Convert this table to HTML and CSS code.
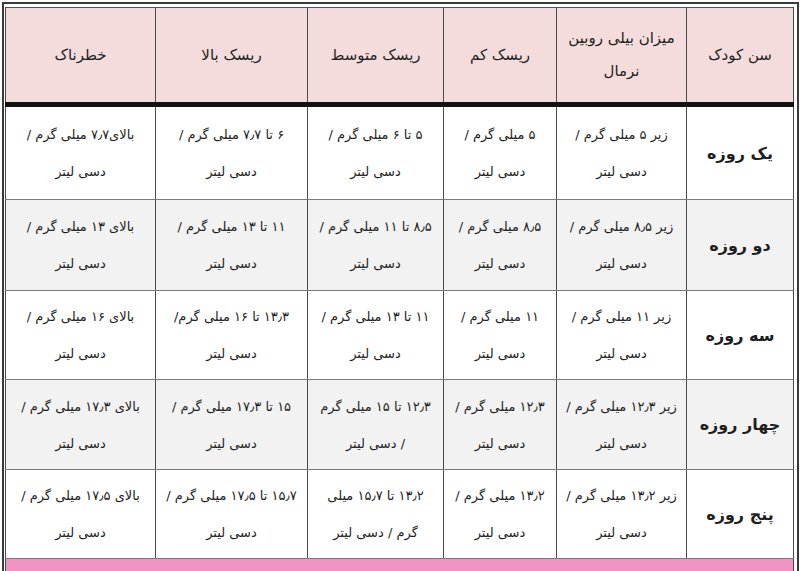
FILE: index.html
```html
<!DOCTYPE html>
<html lang="fa" dir="rtl">
<head>
<meta charset="utf-8">
<link rel="stylesheet" href="styles.css">
</head>
<body>
<div class="frame">
<table class="grid">
<colgroup>
<col class="c-age"><col class="c-norm"><col class="c-low"><col class="c-mid"><col class="c-high"><col class="c-danger">
</colgroup>
<thead>
<tr class="head">
<th>سن کودک</th>
<th>میزان بیلی روبین<br>نرمال</th>
<th>ریسک کم</th>
<th>ریسک متوسط</th>
<th>ریسک بالا</th>
<th>خطرناک</th>
</tr>
</thead>
<tbody>
<tr class="r1">
<td class="age">یک روزه</td>
<td>زیر ۵ میلی گرم /<br>دسی لیتر</td>
<td>۵ میلی گرم /<br>دسی لیتر</td>
<td>۵ تا ۶ میلی گرم /<br>دسی لیتر</td>
<td>۶ تا ۷٫۷ میلی گرم /<br>دسی لیتر</td>
<td>بالای۷٫۷ میلی گرم /<br>دسی لیتر</td>
</tr>
<tr class="r2 alt">
<td class="age">دو روزه</td>
<td>زیر ۸٫۵ میلی گرم /<br>دسی لیتر</td>
<td>۸٫۵ میلی گرم /<br>دسی لیتر</td>
<td>۸٫۵ تا ۱۱ میلی گرم /<br>دسی لیتر</td>
<td>۱۱ تا ۱۳ میلی گرم /<br>دسی لیتر</td>
<td>بالای ۱۳ میلی گرم /<br>دسی لیتر</td>
</tr>
<tr class="r3">
<td class="age">سه روزه</td>
<td>زیر ۱۱ میلی گرم /<br>دسی لیتر</td>
<td>۱۱ میلی گرم /<br>دسی لیتر</td>
<td>۱۱ تا ۱۳ میلی گرم /<br>دسی لیتر</td>
<td>۱۳٫۳ تا ۱۶ میلی گرم/<br>دسی لیتر</td>
<td>بالای ۱۶ میلی گرم /<br>دسی لیتر</td>
</tr>
<tr class="r4 alt">
<td class="age">چهار روزه</td>
<td>زیر ۱۲٫۳ میلی گرم /<br>دسی لیتر</td>
<td>۱۲٫۳ میلی گرم /<br>دسی لیتر</td>
<td>۱۲٫۳ تا ۱۵ میلی گرم<br>/ دسی لیتر</td>
<td>۱۵ تا ۱۷٫۳ میلی گرم /<br>دسی لیتر</td>
<td>بالای ۱۷٫۳ میلی گرم /<br>دسی لیتر</td>
</tr>
<tr class="r5">
<td class="age">پنج روزه</td>
<td>زیر ۱۳٫۲ میلی گرم /<br>دسی لیتر</td>
<td>۱۳٫۲ میلی گرم /<br>دسی لیتر</td>
<td>۱۳٫۲ تا ۱۵٫۷ میلی<br>گرم / دسی لیتر</td>
<td>۱۵٫۷ تا ۱۷٫۵ میلی گرم /<br>دسی لیتر</td>
<td>بالای ۱۷٫۵ میلی گرم /<br>دسی لیتر</td>
</tr>
<tr class="foot">
<td colspan="6"></td>
</tr>
</tbody>
</table>
</div>
</body>
</html>
```
FILE: styles.css
```css
html, body {
  margin: 0;
  padding: 0;
  background: #ffffff;
  height: 100%;
  overflow: hidden;
}

body {
  font-family: "DejaVu Sans", "Noto Sans", sans-serif;
  color: #1e1e1e;
}

.frame {
  box-sizing: border-box;
  margin: 2px 1px 0 1px;
  width: 797px;
  height: 569px;
  overflow: hidden;
  border: 2px solid #3a3a3a;
  border-bottom: none;
  padding: 3px 3px 0 3px;
}

.grid {
  width: 788px;
  border-collapse: collapse;
  table-layout: fixed;
  border: 1px solid #555;
}

.c-age { width: 107px; }
.c-norm { width: 130px; }
.c-low { width: 113px; }
.c-mid { width: 136px; }
.c-high { width: 152px; }
.c-danger { width: 150px; }

.grid th,
.grid td {
  border-left: 1px solid #4a4a4a;
  border-right: 1px solid #4a4a4a;
  border-bottom: 1px solid #7a7a7a;
  text-align: center;
  vertical-align: middle;
  padding: 0 4px;
  font-size: 13px;
  line-height: 37px;
  font-weight: normal;
}

.head th {
  background: #f4dcdc;
  height: 94px;
  font-size: 15px;
  line-height: 33px;
  border-bottom: 5px solid #111;
}

.grid td.age {
  font-size: 16px;
  font-weight: bold;
}

.r1 td { height: 92px; }
.r2 td { height: 90px; }
.r3 td { height: 88px; }
.r4 td { height: 89px; }
.r5 td { height: 88px; }

.alt td { background: #f2f2f2; }

.foot td {
  background: #f193c3;
  height: 12px;
  line-height: 12px;
  border-top: 1px solid #555;
}
```
